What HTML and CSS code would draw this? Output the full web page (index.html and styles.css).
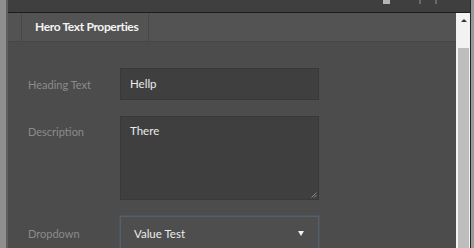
FILE: index.html
```html
<!DOCTYPE html>
<html>
<head>
<meta charset="utf-8">
<link rel="stylesheet" href="styles.css">
</head>
<body>
<div class="window">
  <div class="edge-left"></div>
  <div class="main">
    <div class="topbar">
      <span class="tb-icon tb-icon-a"></span>
      <span class="tb-icon tb-icon-b"></span>
    </div>
    <div class="body">
      <div class="panel">
        <div class="tabbar">
          <div class="tab">Hero Text Properties</div>
        </div>
        <div class="content">
          <div class="row row-center">
            <div class="label">Heading Text</div>
            <div class="field input">Hellp</div>
          </div>
          <div class="row row-top">
            <div class="label label-top">Description</div>
            <div class="field textarea">There
              <svg class="grip" width="6" height="6" viewBox="0 0 6 6"><path d="M5.5 0.5 L0.5 5.5 M5.5 3 L3 5.5" stroke="#8a8a8a" stroke-width="1" fill="none"/></svg>
            </div>
          </div>
          <div class="row row-center">
            <div class="label">Dropdown</div>
            <div class="field select"><span>Value Test</span><span class="arrow"></span></div>
          </div>
        </div>
      </div>
      <div class="scrollbar">
        <div class="sb-up"><span class="sb-arrow"></span></div>
        <div class="sb-thumb"></div>
      </div>
    </div>
  </div>
  <div class="edge-right"></div>
</div>
</body>
</html>
```
FILE: styles.css
```css
html, body {
  margin: 0;
  padding: 0;
  width: 474px;
  height: 248px;
  overflow: hidden;
  background: #8d8d8d;
  font-family: Lato, "Open Sans", sans-serif;
}
.window {
  display: flex;
  height: 248px;
}
.edge-left {
  width: 6px;
  background: #8e8e8e;
  border-right: 2px solid #5f5f5f;
  flex: none;
}
.edge-right {
  width: 3px;
  background: #9a9a9a;
  border-left: 1px solid #262626;
  flex: none;
}
.main {
  flex: 1;
  display: flex;
  flex-direction: column;
  min-width: 0;
}
.topbar {
  height: 12px;
  background: #3f3f3f;
  border-bottom: 1px solid #1d1d1d;
  position: relative;
  flex: none;
}
.tb-icon {
  position: absolute;
  top: 0;
}
.tb-icon-a {
  left: 375px;
  width: 7px;
  height: 4px;
  background: #b5b5b5;
}
.tb-icon-b {
  left: 411px;
  width: 18px;
  height: 4px;
  border-left: 2px solid #6a6a6a;
  border-right: 2px solid #6a6a6a;
  box-sizing: border-box;
}
.body {
  flex: 1;
  display: flex;
  min-height: 0;
}
.panel {
  flex: 1;
  display: flex;
  flex-direction: column;
  background: #4c4c4c;
}
.tabbar {
  height: 28px;
  background: #535353;
  border-bottom: 1px solid #464646;
  display: flex;
  flex: none;
  padding-left: 13px;
}
.tab {
  width: 113px;
  padding-left: 13px;
  border-left: 1px solid #474747;
  border-right: 1px solid #474747;
  color: #f4f4f4;
  font-weight: bold;
  font-size: 12px;
  letter-spacing: -0.35px;
  line-height: 28px;
}
.content {
  padding: 26px 0 0 20px;
  display: flex;
  flex-direction: column;
  gap: 16px;
}
.row {
  display: flex;
}
.row-center {
  align-items: center;
}
.row-top {
  align-items: flex-start;
}
.label {
  width: 92px;
  color: #8b8b8b;
  font-size: 11px;
  flex: none;
}
.label-top {
  padding-top: 9px;
}
.field {
  width: 199px;
  box-sizing: border-box;
  color: #ececec;
  font-size: 11.5px;
}
.input {
  height: 32px;
  background: #3f3f3f;
  border: 1px solid #393939;
  padding-left: 9px;
  line-height: 30px;
}
.textarea {
  height: 84px;
  background: #3f3f3f;
  border: 1px solid #393939;
  padding: 7px 9px;
  position: relative;
}
.grip {
  position: absolute;
  right: 1px;
  bottom: 1px;
}
.select {
  height: 34px;
  background: #4e4e4e;
  border: 1px solid #52616d;
  box-shadow: 0 0 0 1px rgba(80, 100, 118, 0.35);
  padding-left: 13px;
  padding-right: 14px;
  display: flex;
  align-items: center;
  justify-content: space-between;
}
.arrow {
  width: 0;
  height: 0;
  border-left: 3px solid transparent;
  border-right: 3px solid transparent;
  border-top: 5px solid #f0f0f0;
}
.scrollbar {
  width: 14px;
  flex: none;
  background: #f2f2f2;
  display: flex;
  flex-direction: column;
  padding: 0 1px 0 2px;
  box-sizing: border-box;
}
.sb-up {
  height: 35px;
  display: flex;
  justify-content: center;
  padding-top: 6px;
  box-sizing: border-box;
  flex: none;
}
.sb-arrow {
  width: 0;
  height: 0;
  border-left: 3px solid transparent;
  border-right: 3px solid transparent;
  border-bottom: 3px solid #333;
}
.sb-thumb {
  flex: 1;
  background: #bdbdbd;
}
```
